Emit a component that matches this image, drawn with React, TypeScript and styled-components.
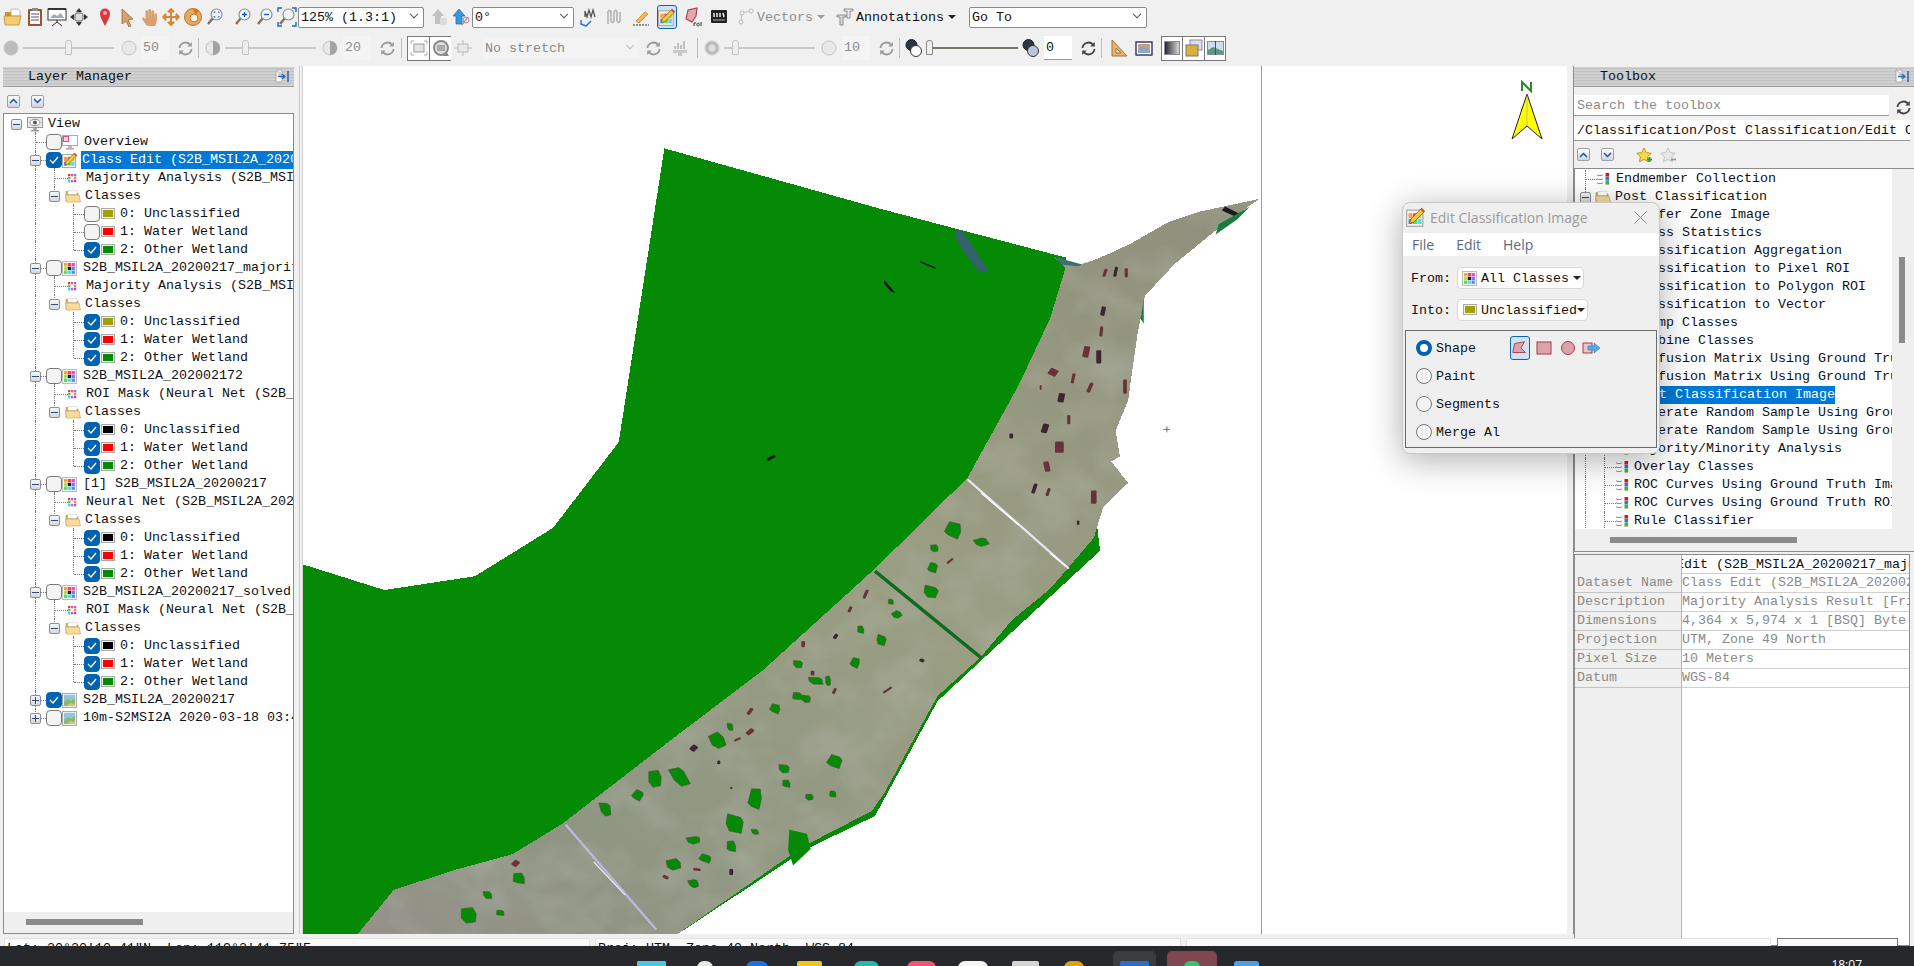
import React from "react";
import styled, { createGlobalStyle } from "styled-components";
import { FaHandPaper, FaArrowsAlt } from "react-icons/fa";

const mono = `"Liberation Mono", "DejaVu Sans Mono", monospace`;
const ui = `"Open Sans", "Noto Sans", sans-serif`;

const Global = createGlobalStyle`
  html, body { margin: 0; padding: 0; background: #f0f0f0; overflow: hidden; }
  * { box-sizing: border-box; }
`;

const Page = styled.div`
  position: relative;
  width: 1914px;
  height: 966px;
  overflow: hidden;
  display: flex;
  flex-direction: column;
  font-family: ${mono};
  font-size: 13.33px;
  color: #111;
`;

/* ---------- toolbars ---------- */
const ToolRow = styled.div<{ $pt?: number; $pb?: number }>`
  height: 33px;
  padding-top: ${(p) => p.$pt ?? 0}px;
  padding-bottom: ${(p) => p.$pb ?? 0}px;
  display: flex;
  align-items: center;
  flex: none;
`;
const Slot = styled.div<{ $w?: number; $ml?: number; $off?: boolean }>`
  width: ${(p) => p.$w ?? 22}px;
  height: 24px;
  margin-left: ${(p) => p.$ml ?? 0}px;
  flex: none;
  display: flex;
  align-items: center;
  justify-content: center;
  opacity: ${(p) => (p.$off ? 0.45 : 1)};
  filter: ${(p) => (p.$off ? "grayscale(1)" : "none")};
`;
const Combo = styled.div<{ $w: number; $ml?: number; $off?: boolean }>`
  width: ${(p) => p.$w}px;
  height: 21px;
  margin-left: ${(p) => p.$ml ?? 0}px;
  flex: none;
  background: ${(p) => (p.$off ? "#f3f3f3" : "#fff")};
  color: ${(p) => (p.$off ? "#8a8a8a" : "#111")};
  border: ${(p) => (p.$off ? "none" : "1px solid #8a8a8a")};
  border-radius: 2px;
  padding-left: 2px;
  display: flex;
  align-items: center;
  justify-content: space-between;
  padding-right: 6px;
  white-space: pre;
`;
const Chevron = styled.span<{ $dim?: boolean }>`
  width: 6px;
  height: 6px;
  border-right: 1px solid ${(p) => (p.$dim ? "#bbb" : "#555")};
  border-bottom: 1px solid ${(p) => (p.$dim ? "#bbb" : "#555")};
  transform: rotate(45deg) translate(-2px, -2px);
`;
const MenuLabel = styled.span<{ $off?: boolean }>`
  color: ${(p) => (p.$off ? "#8d8d8d" : "#111")};
  white-space: pre;
  flex: none;
`;
const Caret = styled.span<{ $off?: boolean; $ml?: number }>`
  margin-left: ${(p) => p.$ml ?? 4}px;
  flex: none;
  width: 0;
  height: 0;
  border-left: 4px solid transparent;
  border-right: 4px solid transparent;
  border-top: 4px solid ${(p) => (p.$off ? "#999" : "#222")};
`;
const SliderTrack = styled.div<{ $w: number; $off?: boolean; $ml?: number }>`
  position: relative;
  flex: none;
  width: ${(p) => p.$w}px;
  margin-left: ${(p) => p.$ml ?? 0}px;
  height: 2px;
  background: ${(p) => (p.$off ? "#c9c9c9" : "#77756a")};
`;
const SliderThumb = styled.span<{ $x: number; $off?: boolean }>`
  position: absolute;
  left: ${(p) => p.$x}px;
  top: -7px;
  width: 7px;
  height: 15px;
  background: #eee;
  border: 1px solid ${(p) => (p.$off ? "#c4c4c4" : "#888")};
  border-radius: 3px 3px 0 0;
`;
const ValueBox = styled.div<{ $ml?: number; $off?: boolean }>`
  width: 28px;
  height: 24px;
  margin-left: ${(p) => p.$ml ?? 0}px;
  flex: none;
  background: ${(p) => (p.$off ? "#f4f4f4" : "#fff")};
  color: ${(p) => (p.$off ? "#8e8e8e" : "#111")};
  border-bottom: ${(p) => (p.$off ? "0" : "1px solid #999")};
  padding-left: 2px;
  line-height: 24px;
`;
const Sep = styled.div<{ $ml?: number }>`
  width: 1px;
  height: 20px;
  background: #bdbdbd;
  margin-left: ${(p) => p.$ml ?? 0}px;
  flex: none;
`;
const ToggleBtn = styled.div<{ $ml?: number; $w?: number }>`
  width: ${(p) => p.$w ?? 22}px;
  height: 25px;
  margin-left: ${(p) => p.$ml ?? 0}px;
  flex: none;
  display: flex;
  align-items: center;
  justify-content: center;
  background: #fff;
  border-top: 1px solid #777;
  border-bottom: 1px solid #777;
  border-left: 1px solid #777;
  &:last-of-type { border-right: 1px solid #777; }
`;
const ActiveTool = styled.div`
  width: 20px;
  height: 24px;
  flex: none;
  border: 1px solid #0a66b0;
  border-radius: 3px;
  background: #cfe3f5;
  display: flex;
  align-items: center;
  justify-content: center;
`;

/* ---------- panels ---------- */
const Main = styled.div`
  height: 868px;
  flex: none;
  display: flex;
`;
const LeftPanel = styled.div`
  width: 302px;
  flex: none;
  padding: 1px 8px 0 3px;
  display: flex;
  flex-direction: column;
  background: linear-gradient(90deg, #f0f0f0 299px, #c9c9c9 299px, #c9c9c9 300px, #f0f0f0 300px);
`;
const DockHead = styled.div<{ $left: number }>`
  height: 20px;
  flex: none;
  padding-left: ${(p) => p.$left}px;
  padding-right: 4px;
  display: flex;
  align-items: center;
  justify-content: space-between;
  border-bottom: 1px solid #9d9d9d;
  background: repeating-linear-gradient(180deg, #d2d2d2 0 1px, #c2c2c2 1px 2px, #cecece 2px 3px);
`;
const SmallBtnRow = styled.div<{ $h: number; $pl: number; $pt?: number }>`
  height: ${(p) => p.$h}px;
  flex: none;
  padding-left: ${(p) => p.$pl}px;
  padding-top: ${(p) => p.$pt ?? 0}px;
  display: flex;
  align-items: center;
  gap: 11px;
`;
const NudgeBtn = styled.div`
  width: 13px;
  height: 13px;
  flex: none;
  border: 1px solid #9aa0aa;
  border-radius: 2px;
  background: linear-gradient(#fff, #cfd3da);
  display: flex;
  align-items: center;
  justify-content: center;
`;
const TreeBox = styled.div`
  position: relative;
  flex: 1;
  background: #fff;
  border: 1px solid #8c8c8c;
  overflow: hidden;
  padding-top: 1px;
`;
const ScrollGutter = styled.div<{ $pl: number; $tw: number }>`
  position: absolute;
  left: 0;
  right: 0;
  bottom: 0;
  height: 21px;
  background: #efefef;
  &::after {
    content: "";
    position: absolute;
    left: ${(p) => p.$pl}px;
    top: 7px;
    width: ${(p) => p.$tw}px;
    height: 6px;
    background: #8a8a8a;
  }
`;
const Row = styled.div<{ $pl: number }>`
  position: relative;
  height: 18px;
  padding-left: ${(p) => p.$pl}px;
  display: flex;
  align-items: center;
  white-space: pre;
  & > svg { flex: none; position: relative; z-index: 1; background: #fff; }
`;
const RowText = styled.span<{ $sel?: boolean; $ml: number; $fill?: boolean }>`
  margin-left: ${(p) => p.$ml}px;
  padding-left: ${(p) => (p.$sel ? 1 : 0)}px;
  background: ${(p) => (p.$sel ? "#0078d7" : "transparent")};
  color: ${(p) => (p.$sel ? "#fff" : "#111")};
  line-height: 18px;
  flex: ${(p) => (p.$fill ? 1 : "none")};
  min-width: 0;
  position: relative;
  overflow: hidden;
`;
const VLine = styled.i<{ $x: number; $part?: "top" | "bottom" }>`
  position: absolute;
  left: ${(p) => p.$x}px;
  top: ${(p) => (p.$part === "bottom" ? 9 : 0)}px;
  height: ${(p) => (p.$part ? 9 : 18)}px;
  border-left: 1px dotted #7a7a7a;
`;
const HLine = styled.i<{ $x: number; $w: number }>`
  position: absolute;
  left: ${(p) => p.$x}px;
  top: 9px;
  width: ${(p) => p.$w}px;
  border-top: 1px dotted #7a7a7a;
`;
const Expander = styled.span<{ $x: number }>`
  position: absolute;
  left: ${(p) => p.$x}px;
  top: 4px;
  width: 11px;
  height: 11px;
  border: 1px solid #8b8f96;
  border-radius: 2px;
  background: linear-gradient(#f6f6f6, #d8d8d8);
  display: flex;
  align-items: center;
  justify-content: center;
  z-index: 1;
`;
const Sign = styled.span<{ $plus?: boolean }>`
  position: relative;
  width: 7px;
  height: 1px;
  background: #2f4a80;
  &::after {
    content: "";
    display: ${(p) => (p.$plus ? "block" : "none")};
    position: absolute;
    left: 3px;
    top: -3px;
    width: 1px;
    height: 7px;
    background: #2f4a80;
  }
`;
const Check = styled.span<{ $on?: boolean }>`
  width: 16px;
  height: 16px;
  flex: none;
  position: relative;
  z-index: 1;
  border-radius: 4px;
  border: 1px solid ${(p) => (p.$on ? "#0063b1" : "#7a7a7a")};
  background: ${(p) => (p.$on ? "#0063b1" : "#f3f3f3")};
  display: flex;
  align-items: center;
  justify-content: center;
`;
const Swatch = styled.span<{ $c: string }>`
  width: 14px;
  height: 11px;
  flex: none;
  margin: -2px 0 0 1px;
  background: ${(p) => p.$c};
  border: 2px solid #f0f0f0;
  outline: 1px solid #aaa;
  outline-offset: -1px;
`;
const Splitter = styled.div`
  width: 7px;
  flex: none;
  border-right: 1px solid #8c8c8c;
`;
const MapPane = styled.div`
  position: relative;
  width: 1265px;
  flex: none;
  background: #fff;
  border-left: 1px solid #d0d0d0;
  overflow: hidden;
`;
const NorthArrow = styled.div`
  position: absolute;
  left: 1206px;
  top: 14px;
`;
const RightPanel = styled.div`
  flex: 1;
  display: flex;
  flex-direction: column;
  min-width: 0;
  height: 880px;
  padding-top: 1px;
`;
const SearchRow = styled.div`
  height: 21px;
  margin-top: 8px;
  display: flex;
  flex: none;
`;
const Field = styled.div<{ $w: number; $ph?: boolean; $mt?: number }>`
  width: ${(p) => p.$w}px;
  height: 21px;
  flex: none;
  margin-top: ${(p) => p.$mt ?? 0}px;
  background: #fff;
  border-bottom: 1px solid #999;
  padding-left: 3px;
  line-height: 21px;
  color: ${(p) => (p.$ph ? "#8a8a8a" : "#111")};
  white-space: pre;
  overflow: hidden;
`;
const ToolboxTree = styled.div`
  position: relative;
  height: 384px;
  flex: none;
  background: #efefef;
  border-top: 1px solid #8c8c8c;
  border-bottom: 1px solid #8c8c8c;
  border-left: 1px solid #8c8c8c;
  overflow: hidden;
`;
const ToolboxList = styled.div`
  width: 317px;
  height: 360px;
  padding-top: 1px;
  background: #fff;
  overflow: hidden;
`;
const VThumb = styled.div`
  position: absolute;
  left: 324px;
  top: 88px;
  width: 6px;
  height: 86px;
  background: #8a8a8a;
`;
const HThumb = styled.div`
  position: absolute;
  left: 35px;
  top: 368px;
  width: 187px;
  height: 6px;
  background: #8a8a8a;
`;
const PropTable = styled.div`
  margin-top: 2px;
  width: 336px;
  flex: 1;
  display: grid;
  grid-template-columns: 107px 1fr;
  grid-auto-rows: 19px;
  border: 1px solid #8c8c8c;
  background: linear-gradient(90deg, #efefef 106px, #b5b5b5 106px, #b5b5b5 107px, #fff 107px);
  overflow: hidden;
`;
const PropHead = styled.div`
  overflow: hidden;
  white-space: pre;
  line-height: 19px;
  color: #111;
  text-indent: -6px;
  border-bottom: 1px solid #cfcfcf;
`;
const PropLabel = styled.div`
  padding-left: 2px;
  line-height: 18px;
  color: #8a8a8a;
  border-bottom: 1px solid #c4c4c4;
  border-right: 1px solid #b5b5b5;
  white-space: pre;
`;
const PropValue = styled.div`
  overflow: hidden;
  line-height: 18px;
  color: #8a8a8a;
  border-bottom: 1px solid #cfcfcf;
  white-space: pre;
`;

/* ---------- status + taskbar ---------- */
const StatusBar = styled.div`
  height: 8px;
  margin-top: 4px;
  flex: none;
  display: flex;
  overflow: hidden;
  padding-left: 4px;
`;
const StatusCell = styled.div<{ $w: number; $ml?: number; $combo?: boolean }>`
  width: ${(p) => p.$w}px;
  margin-left: ${(p) => p.$ml ?? 0}px;
  flex: none;
  height: 20px;
  background: #fafafa;
  border: 1px solid ${(p) => (p.$combo ? "#777" : "#e2e2e2")};
  padding: 3px 0 0 2px;
  line-height: 14px;
  white-space: pre;
`;
const Taskbar = styled.div`
  height: 20px;
  flex: none;
  display: flex;
  align-items: flex-start;
  background: #26282b;
  overflow: hidden;
  position: relative;
  z-index: 3;
`;
const TaskIcon = styled.div<{ $ml: number; $w: number; $c: string; $r?: number; $mt?: number }>`
  width: ${(p) => p.$w}px;
  height: 14px;
  flex: none;
  margin-left: ${(p) => p.$ml}px;
  margin-top: ${(p) => p.$mt ?? 15}px;
  background: ${(p) => p.$c};
  border-radius: ${(p) => p.$r ?? 3}px;
`;
const TaskTile = styled.div<{ $ml: number; $w: number; $c: string }>`
  width: ${(p) => p.$w}px;
  height: 20px;
  flex: none;
  margin-left: ${(p) => p.$ml}px;
  margin-top: 5px;
  padding-top: 10px;
  display: flex;
  justify-content: center;
  background: ${(p) => p.$c};
  border-radius: 5px 5px 0 0;
`;
const TileGlyph = styled.div<{ $w: number; $c: string; $r?: number }>`
  width: ${(p) => p.$w}px;
  height: 12px;
  background: ${(p) => p.$c};
  border-radius: ${(p) => p.$r ?? 2}px;
`;
const Clock = styled.div`
  margin-left: auto;
  margin-right: 52px;
  margin-top: 11px;
  font-family: ${ui};
  font-size: 12px;
  line-height: 16px;
  color: #fff;
`;

/* ---------- dialog ---------- */
const Dialog = styled.div`
  position: absolute;
  left: 1402px;
  top: 202px;
  width: 258px;
  height: 252px;
  background: #efefef;
  border: 1px solid #c8c8c8;
  border-radius: 8px;
  box-shadow: 0 6px 34px rgba(0, 0, 0, 0.32);
  overflow: hidden;
  z-index: 5;
  display: flex;
  flex-direction: column;
`;
const DialogTitle = styled.div`
  height: 30px;
  flex: none;
  display: flex;
  align-items: center;
  padding: 0 12px 2px 3px;
  font-family: ${ui};
  font-size: 14px;
  color: #9a9a9a;
  gap: 4px;
`;
const CloseX = styled.span`
  margin-left: auto;
  display: flex;
`;
const DialogMenu = styled.div`
  height: 23px;
  flex: none;
  background: #fff;
  display: flex;
  align-items: center;
  padding-left: 9px;
  gap: 22px;
  font-family: ${ui};
  font-size: 14px;
  color: #5a6a80;
`;
const PickRow = styled.div<{ $mt: number }>`
  display: flex;
  align-items: center;
  margin-top: ${(p) => p.$mt}px;
  padding-left: 8px;
  height: 22px;
  flex: none;
`;
const PickLabel = styled.span`
  width: 46px;
  flex: none;
`;
const PickButton = styled.div`
  height: 22px;
  background: #fff;
  border: 1px solid #d8d8d8;
  border-radius: 4px;
  display: flex;
  align-items: center;
  padding: 0 2px 0 4px;
  gap: 4px;
  white-space: pre;
`;
const ModeGroup = styled.div`
  margin: 9px 2px 0 2px;
  height: 118px;
  border: 1px solid #6a6a6a;
  padding: 3px 0 0 10px;
  display: flex;
  flex-direction: column;
`;
const ModeRow = styled.div`
  height: 28px;
  flex: none;
  display: flex;
  align-items: center;
  gap: 4px;
`;
const Radio = styled.span<{ $on?: boolean }>`
  width: 16px;
  height: 16px;
  flex: none;
  border-radius: 50%;
  border: ${(p) => (p.$on ? "4px solid #0063b1" : "1px solid #777")};
  background: ${(p) => (p.$on ? "#fff" : "#f3f3f3")};
`;
const ModeText = styled.span`
  width: 70px;
  flex: none;
`;

/* ---------- icons ---------- */
const Palette = ({ s = 15 }: { s?: number }) => (
  <svg width={s} height={s} viewBox="0 0 15 15">
    <rect x=".5" y=".5" width="14" height="14" fill="#f4f4f4" stroke="#bbb" />
    {["#f9a23a", "#f5475b", "#e14fd0", "#b9d84a", "#222", "#6c7cf0", "#56e05a", "#5ad9e8", "#5b8cf0"].map((c, i) => (
      <rect key={i} x={2 + (i % 3) * 3.8} y={2 + Math.floor(i / 3) * 3.8} width="3.3" height="3.3" fill={c} />
    ))}
  </svg>
);
const MiniGrid = () => (
  <svg width="9" height="9" viewBox="0 0 9 9">
    <rect width="9" height="9" fill="#eee" />
    {["#e33", "#f4a", "#77e", "#4c4", "#eee", "#f80", "#4ce", "#e4e", "#66f"].map((c, i) => (
      <rect key={i} x={(i % 3) * 3} y={Math.floor(i / 3) * 3} width="2.2" height="2.2" fill={c} />
    ))}
  </svg>
);
const PalettePencil = ({ s = 16 }: { s?: number }) => (
  <svg width={s} height={s} viewBox="0 0 16 16">
    <rect x=".5" y="2.5" width="13" height="13" fill="#f4f4f4" stroke="#aaa" />
    {["#f9a23a", "#f5475b", "#c9d84a", "#6c7cf0", "#56e05a", "#5ad9e8"].map((c, i) => (
      <rect key={i} x={2 + (i % 3) * 3.6} y={5 + Math.floor(i / 3) * 4.6} width="3.2" height="4" fill={c} />
    ))}
    <path d="M3 13 L4 9.5 L12.5 1 L15 3.4 L6.4 12 Z" fill="#f2c63a" stroke="#8a6a10" strokeWidth=".7" />
    <path d="M12.5 1 L15 3.4 L14 4.4 L11.5 2 Z" fill="#d9433a" />
  </svg>
);
const Folder = () => (
  <svg width="16" height="14" viewBox="0 0 16 14">
    <path d="M1 2.5h5l1 1.5h6v8H1z" fill="#d9b261" stroke="#b08a3c" strokeWidth=".6" />
    <path d="M3 1.5h9v4H3z" fill="#fff" stroke="#bbb" strokeWidth=".4" />
    <path d="M0.5 6h13.5l1.5 7H1.5z" fill="#f7dc9c" stroke="#c39c4a" strokeWidth=".6" />
  </svg>
);
const MonitorEye = () => (
  <svg width="16" height="15" viewBox="0 0 16 15">
    <rect x=".5" y=".5" width="15" height="10" fill="#e8e8e8" stroke="#999" />
    <ellipse cx="8" cy="5.5" rx="5" ry="3.2" fill="#fff" stroke="#666" strokeWidth=".7" />
    <circle cx="8" cy="5.5" r="2" fill="#4b5c70" />
    <rect x="6" y="11" width="4" height="2" fill="#aaa" />
    <rect x="4" y="13" width="8" height="1.5" fill="#999" />
  </svg>
);
const OverviewIcon = () => (
  <svg width="16" height="15" viewBox="0 0 16 15">
    <rect x=".5" y=".5" width="15" height="10" fill="#fff" stroke="#aaa" />
    <rect x="1.5" y="1.5" width="5" height="5" fill="#ffd0e0" stroke="#e8478a" />
    <rect x="6" y="11" width="4" height="2" fill="#bbb" />
    <rect x="4" y="13" width="8" height="1.5" fill="#aaa" />
  </svg>
);
const ImageIcon = () => (
  <svg width="15" height="15" viewBox="0 0 15 15">
    <rect x=".5" y=".5" width="14" height="14" fill="#e8eef0" stroke="#aaa" />
    <rect x="2" y="2" width="11" height="11" fill="#8cc6e0" />
    <path d="M2 9l4-3 3 2 4-3v8H2z" fill="#8fb86a" />
    <path d="M5 13l3-3 5 1v2z" fill="#d8c070" />
  </svg>
);
const ToolTree = () => (
  <svg width="13" height="13" viewBox="0 0 13 13">
    {[1, 5, 9].map((y, i) => (
      <g key={y}>
        <path d={`M0 ${y + 1}h1l1 1 1-1 1 1 1-1h1`} fill="none" stroke="#777" strokeWidth=".8" />
        <rect x="8.5" y={y - 1} width="3.6" height="3.6" fill={["#c8202a", "#1a86c8", "#5aaa28"][i]} />
      </g>
    ))}
  </svg>
);
const Tick = () => (
  <svg width="10" height="8" viewBox="0 0 10 8">
    <path d="M1 4l3 3 5-6" fill="none" stroke="#fff" strokeWidth="1.2" />
  </svg>
);
const Glass = ({ mark }: { mark: "plus" | "minus" | "fit" | "box" }) => (
  <svg width="20" height="20" viewBox="0 0 20 20">
    {mark === "box" && <path d="M1 5V1h4M15 1h4v4M1 15v4h4M15 19h4v-4" fill="none" stroke="#2563b8" strokeWidth="1.4" />}
    <path d="M8 11L3 17" stroke="#8a6f52" strokeWidth="2.4" />
    <circle cx="11.5" cy="7.5" r="5.5" fill="#eef4fb" stroke="#8a8f98" strokeWidth="1.2" />
    {mark === "plus" && <path d="M9 7.5h5M11.5 5v5" stroke="#2050c0" strokeWidth="1.3" />}
    {mark === "minus" && <path d="M9 7.5h5" stroke="#2050c0" strokeWidth="1.3" />}
    {mark === "fit" && <path d="M9 6V5h1.5M13 5h1v1M9 9v1h1.5M13 10h1V9" fill="none" stroke="#2050c0" strokeWidth=".9" />}
  </svg>
);
const Refresh = ({ off }: { off?: boolean }) => (
  <svg width="17" height="15" viewBox="0 0 17 15">
    <path d="M2.5 7a6 6 0 0 1 10.5-3.4" fill="none" stroke={off ? "#9a9a9a" : "#444"} strokeWidth="1.8" />
    <path d="M14.8 1v4.6h-4.6z" fill={off ? "#9a9a9a" : "#444"} />
    <path d="M14.5 8a6 6 0 0 1-10.5 3.4" fill="none" stroke={off ? "#9a9a9a" : "#444"} strokeWidth="1.8" />
    <path d="M2.2 14V9.4h4.6z" fill={off ? "#9a9a9a" : "#444"} />
  </svg>
);
const Disc = ({ kind }: { kind: "solid" | "light" | "half" }) => (
  <svg width="16" height="16" viewBox="0 0 16 16">
    <circle cx="8" cy="8" r="7" fill={kind === "solid" ? "#bcbcbc" : "#e8e8e8"} stroke="#c4c4c4" />
    {kind === "half" && <path d="M8 1a7 7 0 0 1 0 14z" fill="#a2a2a2" />}
  </svg>
);
const TwoDiscs = ({ light }: { light?: boolean }) => (
  <svg width="18" height="20" viewBox="0 0 18 20">
    <circle cx="6.5" cy="7" r="5.5" fill="#2c3640" stroke="#222" />
    <circle cx="11" cy="13" r="5.5" fill={light ? "#b8c6dc" : "#fff"} stroke="#333" />
  </svg>
);
const NudgeChevron = ({ up }: { up?: boolean }) => (
  <svg width="9" height="6" viewBox="0 0 9 6">
    <path d={up ? "M1 5l3.5-3.5L8 5" : "M1 1l3.5 3.5L8 1"} fill="none" stroke="#1f4fa0" strokeWidth="1.5" />
  </svg>
);
const DockPin = () => (
  <svg width="15" height="15" viewBox="0 0 15 15">
    <path d="M1 1h6v3M1 1v12h6v-2" fill="#fff" stroke="#aaa" />
    <path d="M3 7.5h6M7 5l3 2.5L7 10" fill="none" stroke="#2a68c0" strokeWidth="1.3" />
    <path d="M13 2v11" stroke="#2a68c0" strokeWidth="1.6" />
  </svg>
);
const ShapeIcon = ({ kind }: { kind: "poly" | "rect" | "circle" | "move" }) => (
  <svg width="20" height="16" viewBox="0 0 20 16">
    {kind === "poly" && <path d="M2 13L4 3 15 1 11 8 16 13z" fill="#dba3ac" stroke="#a83a4a" />}
    {kind === "rect" && <rect x="3" y="2" width="14" height="12" fill="#dba3ac" stroke="#a83a4a" />}
    {kind === "circle" && <circle cx="10" cy="8" r="6.5" fill="#dba3ac" stroke="#a83a4a" />}
    {kind === "move" && (
      <>
        <rect x="1" y="3" width="9" height="10" fill="#e8c3c8" stroke="#a83a4a" />
        <path d="M6 6h6V3l6 5-6 5v-3H6z" fill="#54a8e8" stroke="#2a78c0" strokeWidth=".6" />
      </>
    )}
  </svg>
);
const Star = ({ add }: { add?: boolean }) => (
  <svg width="17" height="16" viewBox="0 0 17 16">
    <path d="M8 1l2.2 4.6 5 .7-3.6 3.5.9 5L8 12.4 3.500 14.800l.9-5L.8 6.300l5-.7z" fill={add ? "#f2d94a" : "#e8e8e8"} stroke={add ? "#b89a20" : "#c0c0c0"} />
    {add ? <path d="M11 12.500h5M13.500 10v5" stroke="#2a9a2a" strokeWidth="1.800" /> : <path d="M11 12.500h5" stroke="#999" strokeWidth="1.800" />}
  </svg>
);
const SmallSvg = ({ children }: { children: React.ReactNode }) => (
  <svg width="20" height="20" viewBox="0 0 20 20">
    {children}
  </svg>
);

/* ---------- map ---------- */
type P = [number, number, number, number, number?];
const greenPatches: P[] = [
  [1045, 785, 25, 28, 20], [1090, 808, 18, 16, -20], [1015, 820, 12, 12], [1012, 858, 14, 18, 15], [1010, 905, 22, 22, 10],
  [897, 980, 10, 14], [930, 1000, 14, 18, 20], [955, 950, 14, 12, -30], [945, 925, 8, 10], [797, 1047, 14, 14],
  [888, 1045, 14, 18, 20], [825, 1080, 20, 14], [845, 1080, 8, 16], [795, 1110, 14, 14], [810, 1115, 14, 14],
  [760, 1135, 16, 16, 20], [688, 1170, 8, 14], [668, 1197, 22, 26, -20], [855, 1238, 22, 22, 20], [775, 1252, 16, 16],
  [778, 1282, 12, 14], [607, 1268, 20, 38, -20], [568, 1272, 20, 28], [540, 1304, 16, 18, 30], [489, 1331, 16, 26, -10],
  [728, 1312, 20, 38, 10], [695, 1360, 26, 32, 15], [815, 1308, 12, 10], [852, 1302, 10, 12], [630, 1392, 20, 14, -15],
  [690, 1405, 14, 20], [728, 1376, 10, 10], [598, 1440, 22, 18, -10], [648, 1428, 18, 14, 20], [630, 1477, 14, 16, -20],
  [350, 1468, 18, 20], [300, 1500, 12, 14], [270, 1540, 24, 26], [320, 1535, 12, 10],
];
const darkSpecks: P[] = [
  [1285, 355, 7, 18, 10], [1282, 395, 5, 20, 5], [1258, 435, 10, 22, 10], [1278, 445, 8, 26], [1205, 475, 14, 14, 30],
  [1237, 487, 5, 20, 10], [1218, 525, 10, 18, 10], [1264, 505, 6, 20, 20], [1320, 503, 6, 28], [1192, 585, 10, 18, 15],
  [1215, 622, 14, 22], [1195, 660, 9, 20, -10], [1175, 703, 6, 20, 15], [1197, 710, 5, 16, 15], [1270, 720, 9, 26],
  [1305, 278, 5, 20, 10], [1322, 280, 5, 18], [1288, 280, 5, 16, 15], [1245, 770, 4, 9], [1185, 505, 3, 10], [1230, 568, 5, 18],
  [1138, 600, 6, 10], [905, 910, 5, 18, 20], [880, 940, 5, 12, 20], [857, 993, 6, 10, 30], [720, 1140, 6, 14, 30],
  [720, 1180, 8, 14, 45], [630, 1212, 10, 12, 40], [805, 1008, 6, 12], [1040, 845, 14, 4, -45], [995, 1040, 8, 6, 30],
  [940, 1098, 18, 4, -40], [700, 1195, 12, 4, -30], [670, 1240, 5, 7], [855, 1100, 5, 12, 20], [820, 1065, 6, 9],
  [690, 1290, 4, 4], [635, 1450, 12, 5, 10], [585, 1465, 10, 6, 30], [690, 1455, 6, 12], [345, 1438, 10, 12, 40],
];
// slightly lumpy outline so the patches are not plain rectangles
const blob = (w: number, h: number, i: number) => {
  const j = (k: number) => (((i * 7 + k * 13) % 5) - 2) * 0.05;
  return [
    [-w / 2 + j(1) * w, -h / 2],
    [w / 4, -h / 2 + j(2) * h],
    [w / 2, -h / 6 + j(3) * h],
    [w / 2 + j(4) * w, h / 2],
    [-w / 6, h / 2 + j(5) * h],
    [-w / 2, h / 5 + j(6) * h],
  ]
    .map((q) => q.join(","))
    .join(" ");
};

const MapCanvas = () => (
  <svg width="1264" height="868" viewBox="0 0 1264 868">
    <defs>
      <linearGradient id="land" x1="1" y1="0" x2="0" y2="1">
        <stop offset="0" stopColor="#8f8f7d" />
        <stop offset=".45" stopColor="#9a9e82" />
        <stop offset=".8" stopColor="#8f9682" />
        <stop offset="1" stopColor="#95918a" />
      </linearGradient>
      <filter id="grain" x="0" y="0" width="100%" height="100%">
        <feTurbulence type="fractalNoise" baseFrequency=".012" numOctaves="3" seed="7" />
        <feColorMatrix values="0 0 0 0 .5  0 0 0 0 .52  0 0 0 0 .46  .7 0 0 0 -.28" />
        <feComposite in2="SourceGraphic" operator="in" />
        <feMerge result="over">
          <feMergeNode in="SourceGraphic" />
          <feMergeNode />
        </feMerge>
      </filter>
    </defs>
    <g transform="translate(-3,64) scale(.625,.51)">
      <path
        fill="#048a04"
        shapeRendering="crispEdges"
        d="M583 36L930 155 1225 250 1230 290 1280 825 1090 1040 1020 1120 940 1300 920 1345 810 1410 600 1580 0 1700 0 850 135 902 280 875 405 780 510 612z"
      />
      <path
        fill="url(#land)"
        filter="url(#grain)"
        shapeRendering="crispEdges"
        d="M1205 248L1250 265 1300 240 1330 222 1390 180 1440 160 1535 135 1500 165 1470 192 1400 262 1352 325 1340 400 1325 530 1305 590 1312 640 1298 650 1325 692 1285 740 1270 800 1235 850 1200 900 1140 960 1088 1035 1020 1110 935 1300 915 1335 805 1405 600 1580 90 1580 150 1490 250 1450 340 1420 420 1360 600 1190 740 1060 920 860 1068 682 1150 500 1200 370 1225 270z"
      />
      <path fill="#3f6d70" d="M1205 248l45 15 20-8-25 12-25-3z" />
      <path fill="#33626a" d="M1046 197l14 0 41 78-4 5-12-4-30-50z" />
      <path fill="#111" d="M935 294l18 26-8-4-11-16zM745 645l14-8 2 4-12 8zM992 257l26 13-2 2-24-12z" />
      <path fill="#1a1a1a" d="M1480 150l25 15-8 5-22-12z" />
      <path fill="none" stroke="#e8e8f4" strokeWidth="4" d="M1068 685L1230 860" />
      <path fill="none" stroke="#fff" strokeWidth="2" d="M1090 712L1150 775M1200 830L1225 855" />
      <path fill="none" stroke="#0e6a20" strokeWidth="6" d="M920 865L1090 1035" />
      <path fill="none" stroke="#b9b8e0" strokeWidth="4" d="M425 1362L570 1568" />
      <path fill="none" stroke="#eef" strokeWidth="2" d="M470 1435L520 1500" />
      <path fill="#048a04" d="M783 1372l28 8 6 30-28 32-8-30z" />
      <path fill="#1a7a40" d="M1470 185l50-35-20 25-35 30zM1350 330l-5 40 5 10z" />
      {greenPatches.map(([x, y, w, h, r], i) => (
        <polygon key={i} points={blob(w, h, i)} fill="#048a04" stroke="#5a3a3c" strokeOpacity=".7" transform={`translate(${x} ${y}) rotate(${r ?? 0})`} />
      ))}
      {darkSpecks.map(([x, y, w, h, r], i) => (
        <rect key={i} x={x - w / 2} y={y - h / 2} width={w} height={h} rx="2" fill={i % 3 === 0 ? "#3a2630" : "#6a3238"} transform={`rotate(${r ?? 0} ${x} ${y})`} />
      ))}
      <path stroke="#333" strokeWidth="1.200" d="M1381 587h11M1387 581v12" />
    </g>
    <rect x="958" y="0" width="1" height="868" fill="#35c8d0" />
  </svg>
);

/* ---------- tree data ---------- */
type Kind = "root" | "overview" | "layer" | "sub" | "classes" | "item" | "image";
interface TreeItem {
  kind: Kind;
  text: string;
  on?: boolean;
  color?: string;
  sel?: boolean;
  last?: boolean;
}
const group = (title: string, sub: string, zero: string, allOn: boolean, sel = false): TreeItem[] => [
  { kind: "layer", text: title, sel, on: sel },
  { kind: "sub", text: sub },
  { kind: "classes", text: "Classes" },
  { kind: "item", text: "0: Unclassified", on: allOn, color: zero },
  { kind: "item", text: "1: Water Wetland", on: allOn, color: "#ff0000" },
  { kind: "item", text: "2: Other Wetland", on: true, color: "#008b00", last: true },
];
const tree: TreeItem[] = [
  { kind: "root", text: "View" },
  { kind: "overview", text: "Overview" },
  ...group("Class Edit (S2B_MSIL2A_20200217_majority", "Majority Analysis (S2B_MSIL2A_2020", "#a0a000", false, true),
  ...group("S2B_MSIL2A_20200217_majority", "Majority Analysis (S2B_MSIL2A_2020", "#a0a000", true),
  ...group("S2B_MSIL2A_202002172", "ROI Mask (Neural Net (S2B_MSIL2A", "#000000", true),
  ...group("[1] S2B_MSIL2A_20200217", "Neural Net (S2B_MSIL2A_20200217", "#000000", true),
  ...group("S2B_MSIL2A_20200217_solved", "ROI Mask (Neural Net (S2B_MSIL2A", "#000000", true),
  { kind: "image", text: "S2B_MSIL2A_20200217", on: true },
  { kind: "image", text: "10m-S2MSI2A 2020-03-18 03:40:09", last: true },
];

const LayerRow = ({ item }: { item: TreeItem }) => {
  const { kind, text, on, color, sel, last } = item;
  if (kind === "root")
    return (
      <Row $pl={23}>
        <VLine $x={31} $part="bottom" />
        <Expander $x={7}><Sign /></Expander>
        <MonitorEye />
        <RowText $ml={5}>{text}</RowText>
      </Row>
    );
  if (kind === "overview" || kind === "layer" || kind === "image")
    return (
      <Row $pl={42}>
        <VLine $x={31} $part={last ? "top" : undefined} />
        <HLine $x={32} $w={10} />
        {kind === "layer" && <VLine $x={50} $part="bottom" />}
        {kind !== "overview" && (
          <Expander $x={26}><Sign $plus={kind === "image"} /></Expander>
        )}
        <Check $on={on}>{on && <Tick />}</Check>
        {kind === "overview" ? <OverviewIcon /> : kind === "image" ? <ImageIcon /> : sel ? <PalettePencil /> : <Palette />}
        <RowText $ml={sel ? 3 : 6} $sel={sel} $fill={sel}>{text}</RowText>
      </Row>
    );
  if (kind === "sub")
    return (
      <Row $pl={64}>
        <VLine $x={31} />
        <VLine $x={50} />
        <HLine $x={51} $w={13} />
        <MiniGrid />
        <RowText $ml={9}>{text}</RowText>
      </Row>
    );
  if (kind === "classes")
    return (
      <Row $pl={61}>
        <VLine $x={31} />
        <VLine $x={50} $part="top" />
        <VLine $x={69} $part="bottom" />
        <Expander $x={45}><Sign /></Expander>
        <Folder />
        <RowText $ml={4}>{text}</RowText>
      </Row>
    );
  return (
    <Row $pl={80}>
      <VLine $x={31} />
      <VLine $x={69} $part={last ? "top" : undefined} />
      <HLine $x={70} $w={10} />
      <Check $on={on}>{on && <Tick />}</Check>
      <Swatch $c={color ?? "#000"} />
      <RowText $ml={5}>{text}</RowText>
    </Row>
  );
};

const toolItems = [
  "Buffer Zone Image",
  "Class Statistics",
  "Classification Aggregation",
  "Classification to Pixel ROI",
  "Classification to Polygon ROI",
  "Classification to Vector",
  "Clump Classes",
  "Combine Classes",
  "Confusion Matrix Using Ground Truth Image",
  "Confusion Matrix Using Ground Truth ROI",
  "Edit Classification Image",
  "Generate Random Sample Using Ground Truth",
  "Generate Random Sample Using Ground Truth",
  "Majority/Minority Analysis",
  "Overlay Classes",
  "ROC Curves Using Ground Truth Image",
  "ROC Curves Using Ground Truth ROI",
  "Rule Classifier",
];
const props = [
  ["Dataset Name", "Class Edit (S2B_MSIL2A_20200217_majority"],
  ["Description", "Majority Analysis Result [Fri Mar"],
  ["Dimensions", "4,364 x 5,974 x 1 [BSQ] Byte"],
  ["Projection", "UTM, Zone 49 North"],
  ["Pixel Size", "10 Meters"],
  ["Datum", "WGS-84"],
];

export default function App() {
  return (
    <Page>
      <Global />
      <ToolRow $pt={1}>
        <Slot $ml={2}>
          <svg width="20" height="20" viewBox="0 0 20 20">
            <path d="M2 5h6l1 2h7v10H2z" fill="#c9962f" />
            <path d="M8 2h7l2 2v5H8z" fill="#fff" stroke="#999" strokeWidth=".6" />
            <path d="M1 9h17l-2 9H2z" fill="#f3cd72" stroke="#b5852a" strokeWidth=".7" />
          </svg>
        </Slot>
        <Slot>
          <SmallSvg>
            <rect x="3" y="2" width="14" height="17" rx="1" fill="#a0522d" />
            <rect x="5" y="4" width="10" height="13" fill="#fff" />
            <rect x="7" y="1" width="6" height="3" fill="#8a8a8a" />
            <path d="M6 7h8M6 10h8M6 13h8" stroke="#557" />
          </SmallSvg>
        </Slot>
        <Slot>
          <SmallSvg>
            <rect x="1" y="2" width="18" height="11" fill="#fff" stroke="#333" />
            <rect x="1" y="1" width="18" height="2" fill="#333" />
            <path d="M10 13v3M10 15l-5 4M10 15l5 4" stroke="#333" />
            <path d="M3 11l4-4 3 2 4-3 3 5z" fill="#9ab" />
          </SmallSvg>
        </Slot>
        <Slot>
          <SmallSvg>
            <path d="M10 1l3 4H7zM10 19l3-4H7zM1 10l4-3v6zM19 10l-4-3v6z" fill="#333" />
            <rect x="6" y="6" width="8" height="8" rx="2" fill="#ddd" stroke="#666" />
          </SmallSvg>
        </Slot>
        <Slot $ml={4}>
          <SmallSvg>
            <path d="M10 19C7 13 5 10 5 6.500a5 5 0 0 1 10 0C15 10 13 13 10 19z" fill="#e0343e" />
            <circle cx="10" cy="6" r="2" fill="#f7b0b0" />
          </SmallSvg>
        </Slot>
        <Slot>
          <SmallSvg>
            <path d="M5 2l11 10-5 1 3 6-2 1-3-6-4 3z" fill="#d6a36a" stroke="#8a5f30" strokeWidth=".7" />
          </SmallSvg>
        </Slot>
        <Slot><FaHandPaper size={17} color="#d9a06a" /></Slot>
        <Slot><FaArrowsAlt size={18} color="#d68a35" /></Slot>
        <Slot>
          <SmallSvg>
            <circle cx="10" cy="10" r="8.500" fill="#e8a860" stroke="#b8762c" />
            <circle cx="11" cy="11" r="4" fill="#fff3e0" stroke="#b8762c" />
            <path d="M10 2l6 1-3 5z" fill="#c87a2a" />
          </SmallSvg>
        </Slot>
        <Slot><Glass mark="fit" /></Slot>
        <Slot $ml={6}><Glass mark="plus" /></Slot>
        <Slot><Glass mark="minus" /></Slot>
        <Slot><Glass mark="box" /></Slot>
        <Combo $w={126}>
          125% (1.3:1)<Chevron />
        </Combo>
        <Slot $ml={4} $off>
          <SmallSvg>
            <path d="M9 2l6 7h-3v8H6V9H3z" fill="#8a8a8a" />
            <rect x="11" y="11" width="7" height="7" fill="#c4c4c4" />
          </SmallSvg>
        </Slot>
        <Slot>
          <SmallSvg>
            <path d="M8 2l6 7h-3v8H5V9H2z" fill="#3a98e0" stroke="#1a66b0" strokeWidth=".7" />
            <path d="M11 18l6-8" stroke="#c77" strokeWidth="1.200" />
            <circle cx="15" cy="13" r="3" fill="none" stroke="#a88" />
          </SmallSvg>
        </Slot>
        <Combo $w={102}>
          0°<Chevron />
        </Combo>
        <Slot $w={26} $ml={2}>
          <SmallSvg>
            <path d="M2 13v4l5 2 5-5" fill="none" stroke="#2a78d0" strokeWidth="1.500" />
            <path d="M6 10V4l2 6 2-7 2 7 2-7 2 7" fill="none" stroke="#555" strokeWidth="1.300" />
          </SmallSvg>
        </Slot>
        <Slot $w={26} $off>
          <SmallSvg>
            <path d="M3 17V5q2-3 3 0v9q2 3 3 0V5q2-3 3 0v9q2 3 3 0V5" fill="none" stroke="#777" strokeWidth="1.800" />
          </SmallSvg>
        </Slot>
        <Slot $w={26}>
          <SmallSvg>
            <path d="M5 14L14 5l3 2-9 9z" fill="#f3b84a" stroke="#b5802a" strokeWidth=".7" />
            <path d="M2 18h16" stroke="#333" strokeDasharray="2 1" />
          </SmallSvg>
        </Slot>
        <Slot $w={26}>
          <ActiveTool><PalettePencil s={18} /></ActiveTool>
        </Slot>
        <Slot $w={26}>
          <SmallSvg>
            <path d="M3 12l2-9 9-2-1 8-4 6z" fill="#e0a8b0" stroke="#b03a4a" strokeWidth="1.100" />
            <path d="M11 16v3M11 16h2M15 16a1.300 1.500 0 1 0 .1 0M18 15v4" fill="none" stroke="#222" strokeWidth=".9" />
          </SmallSvg>
        </Slot>
        <Slot $w={26}>
          <SmallSvg>
            <rect x="2" y="3" width="16" height="13" rx="1" fill="#222" />
            <path d="M5 6v4M8 6v4M11 6v4M14 6l1 4" stroke="#eee" strokeWidth="1.500" />
            <path d="M4 13h12" stroke="#aaa" />
          </SmallSvg>
        </Slot>
        <Slot $ml={3} $off>
          <SmallSvg>
            <path d="M5 15L6 6l9-2" fill="none" stroke="#888" />
            <circle cx="5" cy="15" r="2" fill="#fff" stroke="#777" />
            <circle cx="6" cy="6" r="2" fill="#fff" stroke="#777" />
            <circle cx="15" cy="4" r="2" fill="#fff" stroke="#777" />
          </SmallSvg>
        </Slot>
        <MenuLabel $off>Vectors</MenuLabel>
        <Caret $off />
        <Slot $ml={9}>
          <SmallSvg>
            <path d="M2 8h9v2H8v8H5v-8H2z" fill="#ddd" stroke="#777" strokeWidth=".8" />
            <path d="M9 2h9v2h-3v7h-3V4H9z" fill="#eee" stroke="#777" strokeWidth=".8" />
          </SmallSvg>
        </Slot>
        <MenuLabel>Annotations</MenuLabel>
        <Caret />
        <Combo $w={178} $ml={13}>
          Go To<Chevron />
        </Combo>
      </ToolRow>
      <ToolRow $pb={3}>
        <Slot><Disc kind="solid" /></Slot>
        <SliderTrack $w={91} $ml={1} $off><SliderThumb $x={42} $off /></SliderTrack>
        <Slot $ml={4}><Disc kind="light" /></Slot>
        <ValueBox $ml={1} $off>50</ValueBox>
        <Slot $ml={5}><Refresh off /></Slot>
        <Sep $ml={2} />
        <Slot $ml={3}><Disc kind="half" /></Slot>
        <SliderTrack $w={91} $ml={1} $off><SliderThumb $x={17} $off /></SliderTrack>
        <Slot $ml={3}><Disc kind="half" /></Slot>
        <ValueBox $ml={2} $off>20</ValueBox>
        <Slot $ml={5}><Refresh off /></Slot>
        <Sep $ml={3} />
        <ToggleBtn $ml={5}>
          <svg width="18" height="16" viewBox="0 0 18 16">
            <rect x="4" y="4" width="10" height="8" fill="#e4e4e4" stroke="#999" />
            <path d="M1 4V1h3M14 1h3v3M1 12v3h3M14 15h3v-3" fill="none" stroke="#aaa" />
          </svg>
        </ToggleBtn>
        <ToggleBtn>
          <svg width="18" height="18" viewBox="0 0 18 18">
            <circle cx="9" cy="9" r="7" fill="#ddd" stroke="#8a8a8a" strokeWidth="2" />
            <rect x="5" y="6" width="8" height="6" fill="#aaa" />
            <path d="M14 12l3 5h-6z" fill="#888" />
          </svg>
        </ToggleBtn>
        <Slot $ml={1} $off>
          <svg width="18" height="16" viewBox="0 0 18 16">
            <rect x="4" y="4" width="10" height="8" fill="#ddd" stroke="#777" />
            <path d="M9 0v4M9 12v4M0 8h4M14 8h4" stroke="#777" />
          </svg>
        </Slot>
        <Combo $w={156} $ml={9} $off>
          No stretch<Chevron $dim />
        </Combo>
        <Slot $ml={3}><Refresh off /></Slot>
        <Slot $ml={5} $off>
          <SmallSvg>
            <path d="M3 12h14v3H3zM8 15h4v3H8z" fill="#999" />
            <path d="M5 11V8M8 11V5M11 11V7M14 11V3" stroke="#888" strokeWidth="2" />
          </SmallSvg>
        </Slot>
        <Sep $ml={6} />
        <Slot $ml={3}>
          <svg width="16" height="16" viewBox="0 0 16 16">
            <circle cx="8" cy="8" r="7" fill="#bbb" stroke="#ccc" />
            <circle cx="8" cy="8" r="3.500" fill="#ddd" />
          </svg>
        </Slot>
        <SliderTrack $w={91} $ml={1} $off><SliderThumb $x={8} $off /></SliderTrack>
        <Slot $ml={3}><Disc kind="light" /></Slot>
        <ValueBox $ml={2} $off>10</ValueBox>
        <Slot $ml={5}><Refresh off /></Slot>
        <Sep $ml={2} />
        <Slot $ml={3}><TwoDiscs /></Slot>
        <SliderTrack $w={92} $ml={1}><SliderThumb $x={0} /></SliderTrack>
        <Slot $ml={2}><TwoDiscs light /></Slot>
        <ValueBox $ml={2}>0</ValueBox>
        <Slot $ml={5}><Refresh /></Slot>
        <Sep $ml={2} />
        <Slot $ml={6}>
          <SmallSvg>
            <path d="M3 18V2l15 16z" fill="#e2b478" stroke="#a8702a" />
            <path d="M7 15V10l5 5z" fill="#f0f0f0" stroke="#a8702a" />
          </SmallSvg>
        </Slot>
        <Slot $ml={3}>
          <SmallSvg>
            <rect x="2" y="4" width="16" height="13" fill="#fff" stroke="#335" strokeWidth="1.400" />
            <rect x="4" y="6" width="12" height="9" fill="#c4a08a" />
            <path d="M4 11l5-3 7 4v3H4z" fill="#8aa8c4" />
          </SmallSvg>
        </Slot>
        <ToggleBtn $ml={6} $w={21}>
          <svg width="16" height="14" viewBox="0 0 16 14">
            <defs>
              <linearGradient id="fade"><stop offset="0" stopColor="#222" /><stop offset="1" stopColor="#ddd" /></linearGradient>
            </defs>
            <rect x=".5" y=".5" width="15" height="13" fill="url(#fade)" stroke="#88a" />
          </svg>
        </ToggleBtn>
        <ToggleBtn $w={22}>
          <svg width="18" height="18" viewBox="0 0 18 18">
            <rect x="5" y="1" width="12" height="10" fill="#dde" stroke="#88a" />
            <rect x="1" y="6" width="12" height="11" fill="#d8b040" stroke="#777" />
          </svg>
        </ToggleBtn>
        <ToggleBtn $w={22}>
          <svg width="17" height="14" viewBox="0 0 17 14">
            <rect x=".5" y=".5" width="16" height="13" fill="#cde" stroke="#88a" />
            <path d="M1 9l5-3 10 4v3H1z" fill="#5a9a78" />
            <path d="M8.500 0v14" stroke="#2050c0" />
          </svg>
        </ToggleBtn>
      </ToolRow>
      <Main>
        <LeftPanel>
          <DockHead $left={25}>
            Layer Manager
            <DockPin />
          </DockHead>
          <SmallBtnRow $h={26} $pl={4} $pt={2}>
            <NudgeBtn><NudgeChevron up /></NudgeBtn>
            <NudgeBtn><NudgeChevron /></NudgeBtn>
          </SmallBtnRow>
          <TreeBox>
            {tree.map((item, i) => (
              <LayerRow key={i} item={item} />
            ))}
            <ScrollGutter $pl={22} $tw={117} />
          </TreeBox>
        </LeftPanel>
        <MapPane>
          <MapCanvas />
          <NorthArrow>
            <svg width="36" height="60" viewBox="0 0 36 60">
              <path d="M18 14L33 59 18 46 3 59z" fill="#ffff00" stroke="#222" strokeWidth="1" />
              <path d="M18 14v32" stroke="#999" strokeWidth=".6" />
              <path d="M13 11V2l9 9V2" fill="none" stroke="#2a8a2a" strokeWidth="2" />
            </svg>
          </NorthArrow>
        </MapPane>
        <Splitter />
        <RightPanel>
          <DockHead $left={26}>
            Toolbox
            <DockPin />
          </DockHead>
          <SearchRow>
            <Field $w={315} $ph>Search the toolbox</Field>
            <Slot $ml={3}><Refresh /></Slot>
          </SearchRow>
          <Field $w={336} $mt={4}>/Classification/Post Classification/Edit Classification Image</Field>
          <SmallBtnRow $h={27} $pl={3}>
            <NudgeBtn><NudgeChevron up /></NudgeBtn>
            <NudgeBtn><NudgeChevron /></NudgeBtn>
            <Slot $ml={8}><Star add /></Slot>
            <Slot $ml={-9}><Star /></Slot>
          </SmallBtnRow>
          <ToolboxTree>
            <ToolboxList>
              <Row $pl={22}>
                <VLine $x={10} />
                <HLine $x={11} $w={11} />
                <ToolTree />
                <RowText $ml={6}>Endmember Collection</RowText>
              </Row>
              <Row $pl={20}>
                <VLine $x={10} />
                <VLine $x={29} $part="bottom" />
                <Expander $x={5}><Sign /></Expander>
                <Folder />
                <RowText $ml={4}>Post Classification</RowText>
              </Row>
              {toolItems.map((t, i) => (
                <Row key={i} $pl={41}>
                  <VLine $x={10} />
                  <VLine $x={29} />
                  <HLine $x={30} $w={11} />
                  <ToolTree />
                  <RowText $ml={5} $sel={t.startsWith("Edit")}>{t}</RowText>
                </Row>
              ))}
            </ToolboxList>
            <VThumb />
            <HThumb />
          </ToolboxTree>
          <PropTable>
            <div />
            <PropHead>Edit (S2B_MSIL2A_20200217_majority)</PropHead>
            {props.map(([k, v]) => (
              <React.Fragment key={k}>
                <PropLabel>{k}</PropLabel>
                <PropValue>{v}</PropValue>
              </React.Fragment>
            ))}
          </PropTable>
        </RightPanel>
      </Main>
      <StatusBar>
        <StatusCell $w={586}>{`Lat: 30°30'10.41"N, Lon: 119°3'41.75"E`}</StatusCell>
        <StatusCell $w={586} $ml={5}>Proj: UTM, Zone 49 North, WGS-84</StatusCell>
        <StatusCell $w={585} $ml={5} />
        <StatusCell $w={121} $ml={6} $combo />
      </StatusBar>
      <Taskbar>
        <TaskIcon $ml={637} $w={29} $c="#4fc3e8" $r={1} />
        <TaskIcon $ml={31} $w={16} $c="#e8e8e8" $r={8} />
        <TaskIcon $ml={33} $w={22} $c="#1a73d8" $r={8} />
        <TaskIcon $ml={29} $w={25} $c="#f4c419" $r={2} />
        <TaskIcon $ml={32} $w={25} $c="#2bb5b0" $r={12} />
        <TaskIcon $ml={28} $w={29} $c="#f0566e" $r={12} />
        <TaskIcon $ml={22} $w={30} $c="#f4f4f4" $r={10} />
        <TaskIcon $ml={24} $w={27} $c="#d4d4d4" $r={2} />
        <TaskIcon $ml={25} $w={20} $c="#e0a010" $r={8} />
        <TaskTile $ml={29} $w={43} $c="#3a3c40"><TileGlyph $w={29} $c="#2f6fc0" /></TaskTile>
        <TaskTile $ml={11} $w={50} $c="#7f474f"><TileGlyph $w={16} $c="#3fc070" $r={8} /></TaskTile>
        <TaskIcon $ml={17} $w={25} $c="#4aa0e8" $r={3} />
        <Clock>18:07</Clock>
      </Taskbar>
      <Dialog>
        <DialogTitle>
          <PalettePencil s={20} />
          Edit Classification Image
          <CloseX>
            <svg width="13" height="13" viewBox="0 0 13 13">
              <path d="M.5.5l12 12M12.500.5l-12 12" stroke="#888" />
            </svg>
          </CloseX>
        </DialogTitle>
        <DialogMenu>
          <span>File</span>
          <span>Edit</span>
          <span>Help</span>
        </DialogMenu>
        <PickRow $mt={11}>
          <PickLabel>From:</PickLabel>
          <PickButton>
            <Palette />
            All Classes
            <Caret $ml={0} />
          </PickButton>
        </PickRow>
        <PickRow $mt={10}>
          <PickLabel>Into:</PickLabel>
          <PickButton>
            <Swatch $c="#a0a000" />
            Unclassified
            <Caret $ml={-4} />
          </PickButton>
        </PickRow>
        <ModeGroup>
          <ModeRow>
            <Radio $on />
            <ModeText>Shape</ModeText>
            <ActiveTool><ShapeIcon kind="poly" /></ActiveTool>
            <Slot $w={20}><ShapeIcon kind="rect" /></Slot>
            <Slot $w={20}><ShapeIcon kind="circle" /></Slot>
            <Slot $w={20}><ShapeIcon kind="move" /></Slot>
          </ModeRow>
          <ModeRow><Radio /><ModeText>Paint</ModeText></ModeRow>
          <ModeRow><Radio /><ModeText>Segments</ModeText></ModeRow>
          <ModeRow><Radio /><ModeText>Merge Al</ModeText></ModeRow>
        </ModeGroup>
      </Dialog>
    </Page>
  );
}
